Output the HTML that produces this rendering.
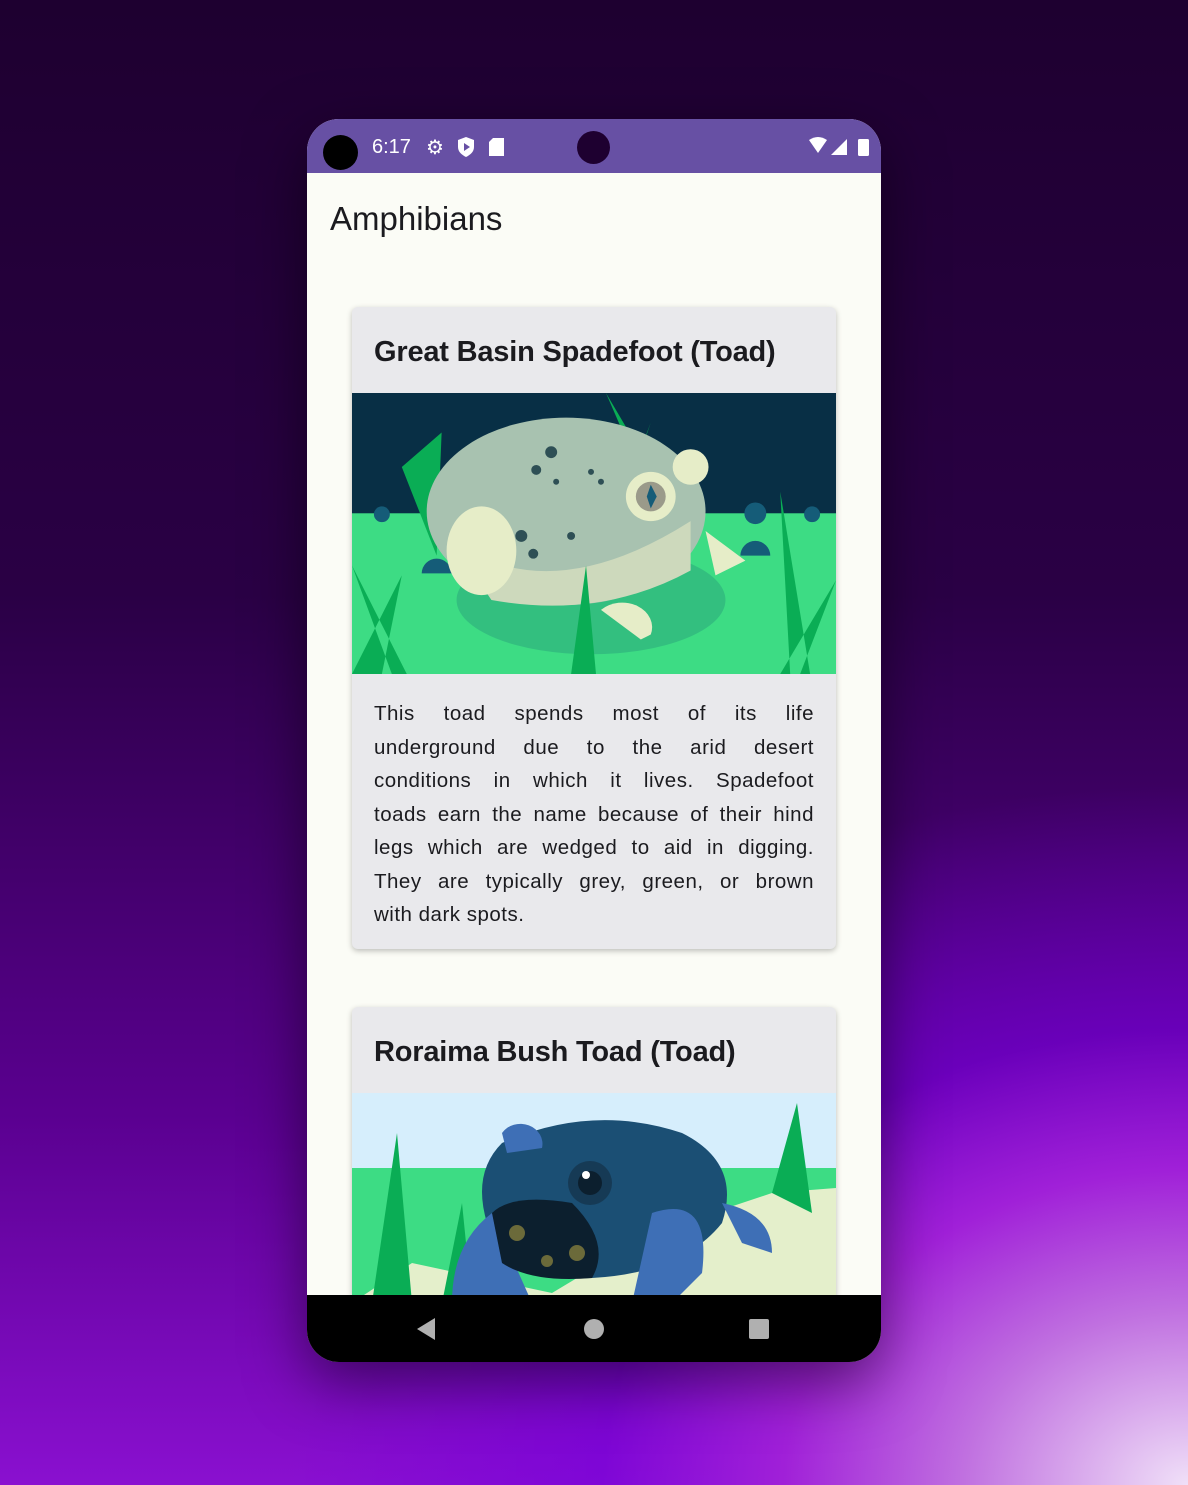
<!DOCTYPE html>
<html><head><meta charset="utf-8"><style>
*{margin:0;padding:0;box-sizing:border-box}
body{width:1188px;height:1485px;overflow:hidden;font-family:"Liberation Sans",sans-serif;
background:radial-gradient(ellipse 900px 700px at 1188px 1485px,#f0e0f8 0%,#c070e0 25%,#a020d8 45%,rgba(120,0,220,0.6) 65%,rgba(40,0,60,0) 100%),linear-gradient(180deg,#1e0030 0%,#2a0045 40%,#5a0090 75%,#8a10d0 100%);position:relative}
.phone{position:absolute;left:307px;top:119px;width:574px;height:1243px;border-radius:32px;overflow:hidden;background:#fbfcf6;box-shadow:0 20px 60px rgba(0,0,0,.5)}
.sb{height:54px;background:#6750a4;position:relative;color:#fff}
.nav{position:absolute;left:0;bottom:0;width:574px;height:67px;background:#000}
h1{position:absolute;left:23px;top:81px;font-weight:400;font-size:33px;color:#1b1b1f}
.card{position:absolute;left:45px;width:484px;background:#e9e9ec;border-radius:6px;overflow:hidden;box-shadow:0 2px 6px rgba(0,0,0,.25)}
.card h2{font-size:29px;font-weight:700;color:#1b1b1f;padding:29px 22px 0;height:86px;letter-spacing:-.2px}
.card p{font-size:20.5px;line-height:33.5px;color:#1b1b1f;padding:23px 22px 17px;letter-spacing:.5px}
.card p span{display:block;text-align:justify;text-align-last:justify;white-space:nowrap}
.card p span.l{text-align-last:left}
</style></head><body>
<div class="phone">
<div class="sb">
<div style="position:absolute;left:16px;top:16px;width:35px;height:35px;border-radius:50%;background:#000"></div>
<div style="position:absolute;left:65px;top:17px;font-size:20px">6:17</div>
<div style="position:absolute;left:119px;top:16px;font-size:20px">⚙</div>
<svg style="position:absolute;left:150px;top:18px" width="18" height="20"><path d="M9 0L17 3V10C17 15 13 18 9 20C5 18 1 15 1 10V3Z" fill="#fff"/><path d="M7 6L13 10L7 14Z" fill="#6750a4"/></svg>
<svg style="position:absolute;left:182px;top:19px" width="15" height="18"><path d="M4 0H15V18H0V4Z" fill="#fff"/></svg>
<div style="position:absolute;left:270px;top:12px;width:33px;height:33px;border-radius:50%;background:#1e0030"></div>
<svg style="position:absolute;left:500px;top:18px" width="68" height="20"><path d="M2 3Q11 -3 20 3L11 16Z" fill="#fff"/><path d="M24 18L40 2V18Z" fill="#fff"/><rect x="51" y="2" width="11" height="17" rx="1.5" fill="#fff"/></svg>
</div>
<h1>Amphibians</h1>
<div class="card" style="top:188px">
<h2>Great Basin Spadefoot (Toad)</h2>
<svg width="484" height="281" viewBox="0 0 486 285" preserveAspectRatio="none" style="display:block">
<rect width="486" height="285" fill="#082f45"/><rect y="122" width="486" height="163" fill="#3ddc84"/>
<circle cx="30" cy="123" r="8" fill="#155c78"/><circle cx="405" cy="122" r="11" fill="#155c78"/><circle cx="462" cy="123" r="8" fill="#155c78"/>
<path d="M70 183a15 15 0 0 1 30 0z" fill="#155c78"/><path d="M390 165a15 15 0 0 1 30 0z" fill="#155c78"/>
<ellipse cx="240" cy="210" rx="135" ry="55" fill="#33bf7f"/>
<path d="M50 75L85 165L90 40Z M255 0L290 60L300 30L285 70Z" fill="#0aad55"/>
<ellipse cx="215" cy="120" rx="140" ry="95" fill="#a8c2b0"/>
<path d="M100 150Q200 220 340 130L340 180Q250 230 140 210Z" fill="#cdd9bc"/>
<ellipse cx="130" cy="160" rx="35" ry="45" fill="#e6edc8"/>
<circle cx="300" cy="105" r="25" fill="#e6edc8"/><circle cx="300" cy="105" r="15" fill="#9a9a8a"/><path d="M300 93L306 105L300 117L296 105Z" fill="#155c78"/>
<circle cx="340" cy="75" r="18" fill="#e6edc8"/>
<path d="M250 220a30 25 0 0 1 50 25l-10 5z" fill="#e6edc8"/><path d="M355 140l40 30l-30 15z" fill="#e6edc8"/>
<g fill="#2e4f55"><circle cx="200" cy="60" r="6"/><circle cx="185" cy="78" r="5"/><circle cx="170" cy="145" r="6"/><circle cx="220" cy="145" r="4"/><circle cx="182" cy="163" r="5"/><circle cx="250" cy="90" r="3"/><circle cx="205" cy="90" r="3"/><circle cx="240" cy="80" r="3"/></g>
<path d="M0 175L40 285H55Z M0 285L50 185L30 285Z M220 285L235 175L245 285Z M430 100L460 285H440Z M486 190L430 285H450Z" fill="#0aad55"/>
</svg>
<p><span>This toad spends most of its life</span><span>underground due to the arid desert</span><span>conditions in which it lives. Spadefoot</span><span>toads earn the name because of their hind</span><span>legs which are wedged to aid in digging.</span><span>They are typically grey, green, or brown</span><span class="l">with dark spots.</span></p>
</div>
<div class="card" style="top:888px;height:400px">
<h2>Roraima Bush Toad (Toad)</h2>
<svg width="484" height="210" viewBox="0 0 484 210" style="display:block">
<rect width="484" height="210" fill="#d6eefc"/><rect y="75" width="484" height="135" fill="#3ddc84"/>
<path d="M0 210L60 170L200 200L300 140L420 100L484 95V210Z" fill="#e4efcb"/>
<path d="M20 210L45 40L60 210Z M90 210L110 110L120 210Z M420 100L445 10L460 120Z" fill="#0aad55"/>
<path d="M150 50Q240 10 330 40Q390 70 370 130Q330 180 240 185Q150 190 135 130Q120 80 150 50Z" fill="#1b4f74"/>
<path d="M100 210Q100 150 140 120L180 210Z M300 120Q360 100 350 180L320 210H280Z M370 110Q420 120 420 160L390 150Z" fill="#3e6fb6"/>
<path d="M140 120Q160 100 220 110Q260 150 240 185Q180 190 150 170Z" fill="#0c1f2e"/>
<circle cx="238" cy="90" r="22" fill="#163a55"/><circle cx="238" cy="90" r="12" fill="#0c1f2e"/><circle cx="234" cy="82" r="4" fill="#fff"/>
<circle cx="165" cy="140" r="8" fill="#6b6a3a"/><circle cx="225" cy="160" r="8" fill="#6b6a3a"/><circle cx="195" cy="168" r="6" fill="#6b6a3a"/>
<path d="M150 40a22 20 0 0 1 40 15l-35 5z" fill="#3e6fb6"/>
</svg>
</div>
<div class="nav">
<svg style="position:absolute;left:108px;top:22px" width="22" height="24"><path d="M20 1V23L2 12Z" fill="#b0b0b0"/></svg>
<div style="position:absolute;left:277px;top:24px;width:20px;height:20px;border-radius:50%;background:#b0b0b0"></div>
<div style="position:absolute;left:442px;top:24px;width:20px;height:20px;border-radius:2px;background:#b0b0b0"></div>
</div>
</div>
</body></html>
